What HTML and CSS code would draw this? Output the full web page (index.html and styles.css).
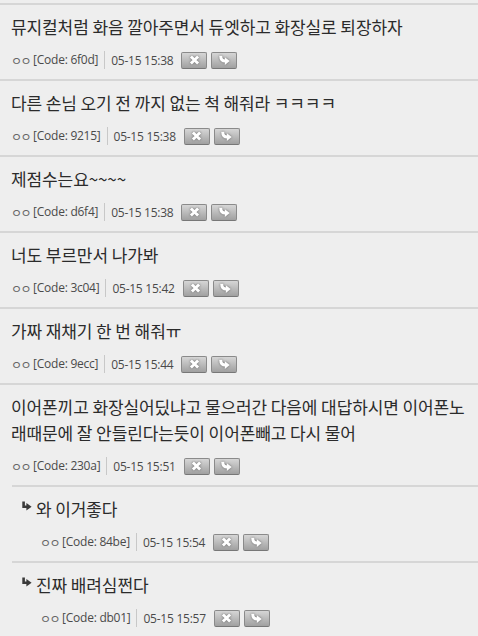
FILE: index.html
```html
<!DOCTYPE html>
<html>
<head>
<meta name="viewport" content="width=device-width, initial-scale=1">
<link rel="stylesheet" href="styles.css">
</head>
<body>

<div class="cmt-list">

  <div class="cmt">
    <div class="cmt-text">뮤지컬처럼 화음 깔아주면서 듀엣하고 화장실로 퇴장하자</div>
    <div class="cmt-info">
      <span class="nick">ㅇㅇ</span>
      <span class="code">[Code: 6f0d]</span>
      <span class="date">05-15 15:38</span>
      <button class="btn btn-del"><svg viewBox="0 0 10 10"><path d="M2 2L8 8M8 2L2 8"/></svg></button>
      <button class="btn btn-re"><svg viewBox="0 0 12 10"><path class="arr" d="M2.5 1C2.5 4.5 4 6 7 6"/><polygon points="6.3,2.4 10.8,6 6.3,9.6"/></svg></button>
    </div>
  </div>

  <div class="cmt">
    <div class="cmt-text">다른 손님 오기 전 까지 없는 척 해줘라 ㅋㅋㅋㅋ</div>
    <div class="cmt-info">
      <span class="nick">ㅇㅇ</span>
      <span class="code">[Code: 9215]</span>
      <span class="date">05-15 15:38</span>
      <button class="btn btn-del"><svg viewBox="0 0 10 10"><path d="M2 2L8 8M8 2L2 8"/></svg></button>
      <button class="btn btn-re"><svg viewBox="0 0 12 10"><path class="arr" d="M2.5 1C2.5 4.5 4 6 7 6"/><polygon points="6.3,2.4 10.8,6 6.3,9.6"/></svg></button>
    </div>
  </div>

  <div class="cmt">
    <div class="cmt-text">제점수는요~~~~</div>
    <div class="cmt-info">
      <span class="nick">ㅇㅇ</span>
      <span class="code">[Code: d6f4]</span>
      <span class="date">05-15 15:38</span>
      <button class="btn btn-del"><svg viewBox="0 0 10 10"><path d="M2 2L8 8M8 2L2 8"/></svg></button>
      <button class="btn btn-re"><svg viewBox="0 0 12 10"><path class="arr" d="M2.5 1C2.5 4.5 4 6 7 6"/><polygon points="6.3,2.4 10.8,6 6.3,9.6"/></svg></button>
    </div>
  </div>

  <div class="cmt">
    <div class="cmt-text">너도 부르만서 나가봐</div>
    <div class="cmt-info">
      <span class="nick">ㅇㅇ</span>
      <span class="code">[Code: 3c04]</span>
      <span class="date">05-15 15:42</span>
      <button class="btn btn-del"><svg viewBox="0 0 10 10"><path d="M2 2L8 8M8 2L2 8"/></svg></button>
      <button class="btn btn-re"><svg viewBox="0 0 12 10"><path class="arr" d="M2.5 1C2.5 4.5 4 6 7 6"/><polygon points="6.3,2.4 10.8,6 6.3,9.6"/></svg></button>
    </div>
  </div>

  <div class="cmt">
    <div class="cmt-text">가짜 재채기 한 번 해줘ㅠ</div>
    <div class="cmt-info">
      <span class="nick">ㅇㅇ</span>
      <span class="code">[Code: 9ecc]</span>
      <span class="date">05-15 15:44</span>
      <button class="btn btn-del"><svg viewBox="0 0 10 10"><path d="M2 2L8 8M8 2L2 8"/></svg></button>
      <button class="btn btn-re"><svg viewBox="0 0 12 10"><path class="arr" d="M2.5 1C2.5 4.5 4 6 7 6"/><polygon points="6.3,2.4 10.8,6 6.3,9.6"/></svg></button>
    </div>
  </div>

  <div class="cmt">
    <div class="cmt-text">이어폰끼고 화장실어딨냐고 물으러간 다음에 대답하시면 이어폰노래때문에 잘 안들린다는듯이 이어폰빼고 다시 물어</div>
    <div class="cmt-info">
      <span class="nick">ㅇㅇ</span>
      <span class="code">[Code: 230a]</span>
      <span class="date">05-15 15:51</span>
      <button class="btn btn-del"><svg viewBox="0 0 10 10"><path d="M2 2L8 8M8 2L2 8"/></svg></button>
      <button class="btn btn-re"><svg viewBox="0 0 12 10"><path class="arr" d="M2.5 1C2.5 4.5 4 6 7 6"/><polygon points="6.3,2.4 10.8,6 6.3,9.6"/></svg></button>
    </div>
  </div>

  <!-- replies -->
  <div class="cmt reply">
    <div class="cmt-text"><svg class="re-icon" viewBox="0 0 10 10"><path d="M1.6 0V5.2H5"/><polygon points="4.4,1.4 9.6,5.2 4.4,9"/></svg>와 이거좋다</div>
    <div class="cmt-info">
      <span class="nick">ㅇㅇ</span>
      <span class="code">[Code: 84be]</span>
      <span class="date">05-15 15:54</span>
      <button class="btn btn-del"><svg viewBox="0 0 10 10"><path d="M2 2L8 8M8 2L2 8"/></svg></button>
      <button class="btn btn-re"><svg viewBox="0 0 12 10"><path class="arr" d="M2.5 1C2.5 4.5 4 6 7 6"/><polygon points="6.3,2.4 10.8,6 6.3,9.6"/></svg></button>
    </div>
  </div>

  <div class="cmt reply">
    <div class="cmt-text"><svg class="re-icon" viewBox="0 0 10 10"><path d="M1.6 0V5.2H5"/><polygon points="4.4,1.4 9.6,5.2 4.4,9"/></svg>진짜 배려심쩐다</div>
    <div class="cmt-info">
      <span class="nick">ㅇㅇ</span>
      <span class="code">[Code: db01]</span>
      <span class="date">05-15 15:57</span>
      <button class="btn btn-del"><svg viewBox="0 0 10 10"><path d="M2 2L8 8M8 2L2 8"/></svg></button>
      <button class="btn btn-re"><svg viewBox="0 0 12 10"><path class="arr" d="M2.5 1C2.5 4.5 4 6 7 6"/><polygon points="6.3,2.4 10.8,6 6.3,9.6"/></svg></button>
    </div>
  </div>

</div>

</body>
</html>
```

FILE: styles.css
```css
body {
  margin: 0;
  background-color: #eeeeee;
  font-family: "Noto Sans CJK KR", "Noto Sans", sans-serif;
  color: #2b2b2b;
}

.cmt-list {
  padding-top: 3px;
}

.cmt {
  border-top: 2px solid #d6d6d6;
  padding: 9px 10px 9px 11px;
}

.cmt.reply {
  margin-left: 12px;
  padding-left: 10px;
}

.cmt-text {
  font-size: 17px;
  line-height: 26px;
  letter-spacing: -0.1px;
}

.re-icon {
  width: 10px;
  height: 11px;
  margin: 0 4px 0 0;
  vertical-align: 4px;
}

.re-icon path {
  fill: none;
  stroke: #3a3a3a;
  stroke-width: 2.6;
}

.re-icon polygon {fill: #3a3a3a;}

.cmt-info {
  display: flex;
  align-items: center;
  height: 20px;
  margin-top: 10px;
  font-family: "Open Sans", "Noto Sans CJK KR", sans-serif;
  font-size: 12px;
  letter-spacing: -0.25px;
  color: #4a4a4a;
}

.reply .cmt-info {
  padding-left: 18px;
}

.nick {
  font-family: "Noto Sans CJK KR", sans-serif;
  font-size: 12px;
  letter-spacing: -1.5px;
  color: #666;
  margin-right: 3px;
}

.code {
  padding-right: 6px;
  border-right: 1px solid #c8c8c8;
  line-height: 18px;
}

.date {
  padding-left: 6px;
  margin-right: 8px;
}

.btn {
  width: 26px;
  height: 17px;
  margin-right: 4px;
  padding: 0;
  border: 1px solid #8a8a8a;
  border-bottom-color: #777;
  border-radius: 2px;
  background: linear-gradient(#d6d6d6, #a0a0a0);
  display: flex;
  align-items: center;
  justify-content: center;
}

.btn svg {
  width: 13px;
  height: 12px;
  filter: drop-shadow(0 0 1px #666);
}

.btn-del path {
  fill: none;
  stroke: #fff;
  stroke-width: 2.4;
}

.btn-re .arr {
  fill: none;
  stroke: #fff;
  stroke-width: 2.8;
}

.btn-re polygon {fill: #fff;}
```
